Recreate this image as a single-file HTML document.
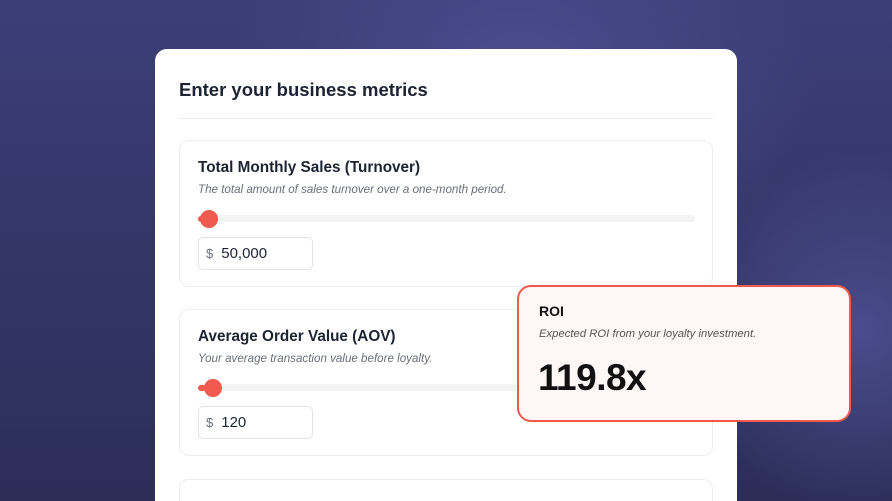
<!DOCTYPE html><html style="width:892px;height:501px;overflow:hidden"><head><style>
*{margin:0;padding:0;box-sizing:border-box}
html,body{width:892px;height:501px;overflow:hidden}
body{position:relative;font-family:"Liberation Sans",sans-serif;
background:radial-gradient(ellipse 420px 300px at 520px 80px,#4b4d8e,transparent 70%),radial-gradient(ellipse 260px 260px at 860px 330px,#4a4c8c,transparent 70%),linear-gradient(180deg,#3c3e78 0%,#2c2e58 100%);}
.card{position:absolute;left:155px;top:49px;width:582px;height:452px;background:#fff;border-radius:12px 12px 0 0;overflow:hidden}
.t{position:absolute;left:24px;top:30px;font-size:18.5px;font-weight:bold;color:#1d2333}
.hr{position:absolute;left:24px;top:69px;width:534px;height:1px;background:#ececef}
.sec{position:absolute;left:24px;width:534px;height:147px;border:1px solid #ededf0;border-radius:10px}
.lab{position:absolute;left:18px;top:18px;font-size:15.3px;font-weight:bold;color:#1d2333}
.d{position:absolute;left:18px;top:42px;font-size:11.6px;font-style:italic;color:#6b6f7a}
.tr{position:absolute;left:18px;top:74px;width:497px;height:7px;background:#f3f3f4;border-radius:4px}
.th{position:absolute;left:20px;top:69px;width:18px;height:18px;border-radius:50%;background:#f15a4e}
.tl{position:absolute;left:18px;top:75px;width:8px;height:6px;border-radius:3px;background:#f15a4e}
.in{position:absolute;left:18px;top:96px;width:115px;height:33px;border:1px solid #e3e3e6;border-radius:5px;font-size:15px;color:#1d2333;padding:7px 0 0 7px}
.in span{color:#6b6f7a;font-size:13px;margin-right:8px}
.roi{position:absolute;left:517px;top:285px;width:334px;height:137px;border:2px solid #f0594c;border-radius:14px;background:#fff6f6}
</style></head><body>
<div class="card">
<div class="t">Enter your business metrics</div><div class="hr"></div>
<div class="sec" style="top:91px"><div class="lab">Total Monthly Sales (Turnover)</div><div class="d">The total amount of sales turnover over a one-month period.</div><div class="tr"></div><div class="tl"></div><div class="th" style="left:20px"></div><div class="in"><span>$</span>50,000</div></div>
<div class="sec" style="top:260px"><div class="lab">Average Order Value (AOV)</div><div class="d">Your average transaction value before loyalty.</div><div class="tr"></div><div class="tl"></div><div class="th" style="left:24px"></div><div class="in"><span>$</span>120</div></div>
<div class="sec" style="top:430px;height:30px;border-bottom:none;border-radius:10px 10px 0 0"></div>
</div>
<div class="roi">
<div style="position:absolute;left:20px;top:16px;font-size:14px;font-weight:bold;color:#111">ROI</div>
<div style="position:absolute;left:20px;top:41px;font-size:11.3px;font-style:italic;color:#555">Expected ROI from your loyalty investment.</div>
<div style="position:absolute;left:19px;top:70px;font-size:37px;font-weight:bold;color:#111;letter-spacing:-0.5px">119.8x</div>
</div>
</body></html>
